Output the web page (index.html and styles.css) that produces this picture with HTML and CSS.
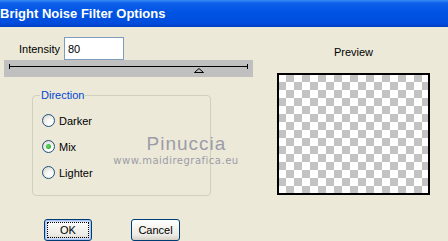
FILE: index.html
```html
<!DOCTYPE html>
<html lang="en">

<head>
    <meta charset="UTF-8">
    <title>Bright Noise Filter Options</title>
    <link rel="stylesheet" href="styles.css">
</head>

<body>
    <div class="titlebar">Bright Noise Filter Options</div>

    <div class="content">
        <div class="left">
            <div class="intensity">
                <label for="intensity">Intensity</label>
                <input type="text" id="intensity" value="80">
            </div>

            <div class="slider">
                <svg width="249" height="17" viewBox="0 0 249 17">
                    <line x1="5" y1="6.5" x2="244" y2="6.5" stroke="#000" stroke-width="1" />
                    <line x1="5.5" y1="4" x2="5.5" y2="9" stroke="#000" stroke-width="1" />
                    <line x1="243.5" y1="4" x2="243.5" y2="9" stroke="#000" stroke-width="1" />
                    <polygon points="190.5,12.5 195,8.5 199.5,12.5" fill="#c0c0c0" stroke="#000" stroke-width="1" />
                </svg>
            </div>

            <div class="group">
                <span class="group-title">Direction</span>
                <div class="radio"><span class="dot"></span>Darker</div>
                <div class="radio"><span class="dot checked"></span>Mix</div>
                <div class="radio"><span class="dot"></span>Lighter</div>
            </div>

            <div class="buttons">
                <button class="btn default"><span>OK</span></button>
                <button class="btn">Cancel</button>
            </div>
        </div>

        <div class="right">
            <div class="preview-label">Preview</div>
            <div class="preview"></div>
        </div>
    </div>

    <!-- watermark over the dialog -->
    <div class="mark">
        <div class="mark-name">Pinuccia</div>
        <div class="mark-url">www.maidiregrafica.eu</div>
    </div>
</body>

</html>
```

FILE: styles.css
```css
body {
    margin: 0;
    padding: 0;
    background-color: #ece9d8;
    font-family: "Liberation Sans", Arial, sans-serif;
    font-size: 11px;
    color: #000;
    width: 448px;
    height: 241px;
    overflow: hidden;
}

.titlebar {
    height: 27px;
    line-height: 27px;
    padding-left: 0;
    color: #fff;
    font-weight: bold;
    font-size: 13px;
    background: linear-gradient(to bottom, #3b8cf6 0, #0f60ea 3px, #0054e3 45%, #004ddc 85%, #0040c4 100%);
}

.content {
    display: flex;
}

.left {
    width: 277px;
}

.intensity {
    display: flex;
    align-items: center;
    margin-top: 10px;
    padding-left: 19px;
}

.intensity label {
    width: 45px;
}

#intensity {
    width: 60px;
    height: 23px;
    box-sizing: border-box;
    border: 1px solid #7f9db9;
    padding: 0 0 0 3px;
    margin: 0;
    font-family: "Liberation Sans", Arial, sans-serif;
    font-size: 11px;
    background: #fff;
}

.slider {
    margin-left: 4px;
    width: 249px;
    height: 17px;
    background-color: #c0c0c0;
}

.slider svg {
    display: block;
}

.group {
    position: relative;
    margin: 18px 0 0 32px;
    width: 179px;
    height: 101px;
    box-sizing: border-box;
    border: 1px solid #d0d0bf;
    border-radius: 4px;
    padding: 18px 0 0 9px;
    display: flex;
    flex-direction: column;
    gap: 13px;
}

.group-title {
    position: absolute;
    top: -7px;
    left: 7px;
    padding: 0 1px;
    line-height: 13px;
    color: #0046d5;
    background-color: #ece9d8;
}

.radio {
    display: flex;
    align-items: center;
    height: 13px;
    gap: 4px;
}

.dot {
    width: 13px;
    height: 13px;
    box-sizing: border-box;
    border: 1px solid #1c5180;
    border-radius: 50%;
    background: radial-gradient(circle at 65% 70%, #fff 20%, #e3e2da 70%, #cdcbc0 100%);
    display: flex;
    align-items: center;
    justify-content: center;
}

.dot.checked::after {
    content: "";
    width: 5px;
    height: 5px;
    border-radius: 50%;
    background: radial-gradient(circle at 40% 40%, #5fdb5f, #21a121);
}

.buttons {
    display: flex;
    gap: 39px;
    margin-top: 23px;
    padding-left: 44px;
}

.btn {
    height: 22px;
    width: 48px;
    padding: 0;
    border: 1px solid #003c74;
    border-radius: 3px;
    font-family: "Liberation Sans", Arial, sans-serif;
    font-size: 11px;
    color: #000;
    background: linear-gradient(to bottom, #fff 0, #f4f3ee 40%, #ecebe6 75%, #d6d0c5 100%);
}

.btn + .btn {
    width: 49px;
}

.btn.default {
    box-shadow: inset 0 0 0 1px #aac4f4, inset 0 0 0 2px #cfdcf7;
}

.btn.default span {
    display: block;
    margin: 3px;
    line-height: 14px;
    outline: 1px dotted #000;
}

.right {
    width: 153px;
}

.preview-label {
    margin-top: 19px;
    text-align: center;
    line-height: 13px;
    font-size: 11px;
}

.preview {
    margin-top: 14px;
    width: 153px;
    height: 122px;
    box-sizing: border-box;
    border: 2px solid #000;
    background: repeating-conic-gradient(#c3c3c3 0 25%, #fff 0 50%) -1px -1px / 16px 16px;
}

.mark {
    position: absolute;
    left: 112px;
    top: 132px;
    width: 128px;
    text-align: center;
    color: #9c9ca8;
}

.mark-name {
    font-family: "Liberation Sans", Arial, sans-serif;
    font-size: 19px;
    line-height: 23px;
    letter-spacing: 1px;
    padding-left: 21px;
}

.mark-url {
    font-family: "DejaVu Sans", sans-serif;
    font-size: 10px;
    line-height: 12px;
    letter-spacing: 0.5px;
}
```
